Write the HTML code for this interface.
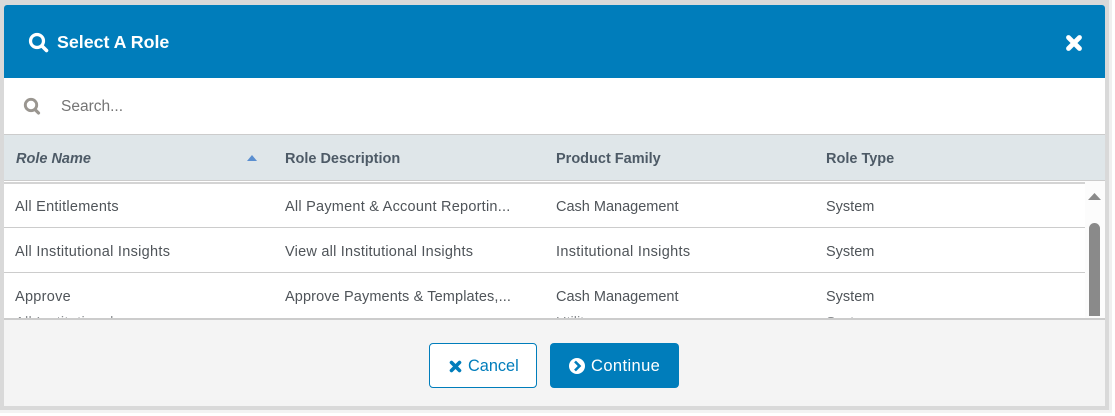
<!DOCTYPE html>
<html><head><meta charset="utf-8"><style>
*{box-sizing:border-box;margin:0;padding:0}
html,body{width:1115px;height:416px;background:#fff;overflow:hidden;font-family:"Liberation Sans",sans-serif}
.a{position:absolute}
.t{position:absolute;white-space:nowrap;font-size:14.5px;line-height:20px;color:#4f5459}
.h{font-weight:bold;color:#4d5a66;font-size:14.5px}
</style></head><body>
<div class="a" style="left:1109px;top:0;width:3px;height:411px;background:#efefef"></div>
<div class="a" style="left:0;top:410px;width:1112px;height:3px;background:#f3f3f3"></div>
<div class="a" style="left:0;top:0;width:1109px;height:410px;background:#d9d9d9"></div>
<div class="a" style="left:4px;top:5px;width:1101px;height:401px;background:#f4f4f4;border-radius:3px 3px 0 0;overflow:hidden">
<div class="a" style="left:0;top:0;width:1101px;height:73px;background:#007dbb"></div>
<div class="a" style="left:0;top:73px;width:1101px;height:56px;background:#fff"></div>
<div class="a" style="left:0;top:176px;width:1101px;height:137px;background:#fff"></div>
<div class="a" style="left:0;top:129px;width:1101px;height:47px;background:#dfe6e9;border-top:1px solid #ccc;border-bottom:1px solid #ccc"></div>
<div class="a" style="left:0;top:177px;width:1081px;height:2px;background:#d4d4d4"></div>
<div class="a" style="left:0;top:222px;width:1081px;height:1px;background:#ccc"></div>
<div class="a" style="left:0;top:267px;width:1081px;height:1px;background:#ccc"></div>
<div class="a" style="left:1081px;top:176px;width:20px;height:137px;background:#fcfcfc"></div>
<div class="a" style="left:0;top:313px;width:1101px;height:2px;background:#ccc"></div>
</div>
<div class="t" style="left:57px;top:32px;font-size:17.800px;font-weight:bold;color:#fff">Select A Role</div>
<div class="t" style="left:61px;top:97px;font-size:15.500px;color:#757575">Search...</div>
<div class="t h" style="left:16px;top:149px;font-style:italic">Role Name</div>
<div class="t h" style="left:285px;top:149px">Role Description</div>
<div class="t h" style="left:556px;top:149px">Product Family</div>
<div class="t h" style="left:826px;top:149px">Role Type</div>
<div class="t" style="left:15px;top:197px;letter-spacing:.25px">All Entitlements</div>
<div class="t" style="left:285px;top:197px;letter-spacing:.24px">All Payment &amp; Account Reportin...</div>
<div class="t" style="left:556px;top:197px">Cash Management</div>
<div class="t" style="left:826px;top:197px">System</div>
<div class="t" style="left:15px;top:242px;letter-spacing:.3px">All Institutional Insights</div>
<div class="t" style="left:285px;top:242px;letter-spacing:.23px">View all Institutional Insights</div>
<div class="t" style="left:556px;top:242px;letter-spacing:.32px">Institutional Insights</div>
<div class="t" style="left:826px;top:242px">System</div>
<div class="t" style="left:15px;top:287px;letter-spacing:.28px">Approve</div>
<div class="t" style="left:285px;top:287px;letter-spacing:.12px">Approve Payments &amp; Templates,...</div>
<div class="t" style="left:556px;top:287px">Cash Management</div>
<div class="t" style="left:826px;top:287px">System</div>
<div class="a" style="left:0;top:313px;width:1085px;height:5px;overflow:hidden">
<div class="t" style="left:15px;top:0;letter-spacing:.3px;color:#8a8d90">All Institutional</div>
<div class="t" style="left:556px;top:0;color:#8a8d90">Utility</div>
<div class="t" style="left:826px;top:0;color:#8a8d90">System</div>
</div>
<div class="a" style="left:429px;top:343px;width:108px;height:45px;background:#fff;border:1px solid #007dbb;border-radius:4px"></div>
<div class="t" style="left:468px;top:356px;font-size:16.300px;color:#007dbb">Cancel</div>
<div class="a" style="left:550px;top:343px;width:129px;height:45px;background:#007dbb;border-radius:4px"></div>
<div class="t" style="left:591px;top:356px;font-size:16.500px;letter-spacing:.4px;color:#fff">Continue</div>
<svg class="a" style="left:0;top:0" width="1115" height="416" viewBox="0 0 1115 416">
<circle cx="37" cy="41" r="6.500" fill="none" stroke="#fff" stroke-width="3.200"/>
<path d="M42.500 46.500L46.500 50.500" stroke="#fff" stroke-width="3.600" stroke-linecap="round"/>
<circle cx="31" cy="105" r="5.700" fill="none" stroke="#9a9690" stroke-width="2.900"/>
<path d="M35.500 110L38.500 113" stroke="#9a9690" stroke-width="3.200" stroke-linecap="round"/>
<path d="M1068.500 37.500L1079.500 48.500M1079.500 37.500L1068.500 48.500" stroke="#fff" stroke-width="4.800" stroke-linecap="round"/>
<path d="M247 161L252 155L257 161Z" fill="#5b8fd0"/>
<path d="M1088 200L1094.500 193L1101 200Z" fill="#8a8a8a"/>
<path d="M1089 316V228.500A5.500 5.500 0 0 1 1100 228.500V316H1089Z" fill="#8a8a8a"/>
<path d="M451.500 362.500L459.500 370.500M459.500 362.500L451.500 370.500" stroke="#007dbb" stroke-width="3.600" stroke-linecap="round"/>
<circle cx="577" cy="366" r="8" fill="#fff"/>
<path d="M575 361.500L579.500 366L575 370.500" fill="none" stroke="#007dbb" stroke-width="2.600"/>
</svg>
</body></html>
